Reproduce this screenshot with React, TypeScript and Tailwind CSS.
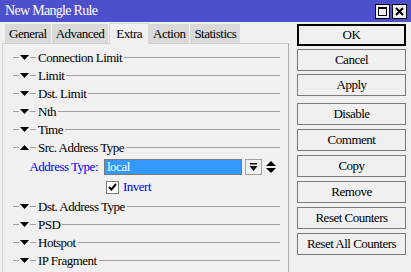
function Tri({ up = false }: { up?: boolean }) {
  return (
    <svg width="9" height="5" viewBox="0 0 9 5" className="shrink-0">
      {up ? <polygon points="0,5 9,5 4.5,0" fill="#000" /> : <polygon points="0,0 9,0 4.5,5" fill="#000" />}
    </svg>
  );
}

function Section({ label, up = false }: { label: string; up?: boolean }) {
  return (
    <div className="flex items-center h-[18px] pl-[10px] pr-[8px]">
      <div className="w-[6px] h-px bg-[#a0a0a0]" />
      <div className="mx-[1px]"><Tri up={up} /></div>
      <div className="w-[6px] h-px bg-[#a0a0a0]" />
      <span className="px-[2px] text-[13px] leading-none text-black whitespace-nowrap">{label}</span>
      <div className="flex-1 h-px bg-[#a0a0a0]" />
    </div>
  );
}

function Btn({ label, primary = false }: { label: string; primary?: boolean }) {
  return (
    <div
      className={`h-[22px] flex items-center justify-center text-[13px] text-black bg-[#f0f0f0] ${
        primary ? 'border-2 border-black' : 'border border-[#7a7a7a]'
      }`}
    >
      {label}
    </div>
  );
}

export default function App() {
  const tabs = ['General', 'Advanced', 'Extra', 'Action', 'Statistics'];
  return (
    <div className="w-[411px] h-[272px] bg-[#f0f0f0] overflow-hidden flex flex-col font-['Liberation_Serif','DejaVu_Serif',serif] tracking-[-0.5px]">
      {/* title */}
      <div className="h-[22px] bg-[#4e4fcb] flex items-center pl-[5px] pr-[4px] shrink-0">
        <span className="text-white text-[14px] leading-none flex-1 tracking-[-0.7px]">New Mangle Rule</span>
        <div className="flex gap-[2px]">
          <div className="w-[15px] h-[15px] bg-[#f0f0f0] border border-black flex items-center justify-center">
            <div className="w-[9px] h-[9px] border border-black border-t-2" />
          </div>
          <div className="w-[15px] h-[15px] bg-[#f0f0f0] border border-black flex items-center justify-center">
            <svg width="9" height="9" viewBox="0 0 9 9">
              <path d="M1 1 L8 8 M8 1 L1 8" stroke="#000" strokeWidth="2" />
            </svg>
          </div>
        </div>
      </div>

      <div className="flex flex-1">
        {/* left */}
        <div className="w-[290px] flex flex-col pl-[2px]">
          <div className="flex items-end h-[21px] pl-[3px] shrink-0">
            {tabs.map((t) =>
              t === 'Extra' ? (
                <div key={t} className="h-[21px] px-[6px] bg-[#f0f0f0] border-x border-t border-[#d8d8d8] flex items-center text-[13px] relative z-10 -mb-px">
                  {t}
                </div>
              ) : (
                <div key={t} className="h-[19px] px-[4px] bg-[#d9d9d9] border-r border-[#f0f0f0] flex items-center text-[13px]">
                  {t}
                </div>
              )
            )}
          </div>
          <div className="flex-1 border-l border-t border-r border-[#d0d0d0] border-r-[#b0b0b0] pt-[4px] mr-[1px]">
            <Section label="Connection Limit" />
            <Section label="Limit" />
            <Section label="Dst. Limit" />
            <Section label="Nth" />
            <Section label="Time" />
            <Section label="Src. Address Type" up />
            <div className="flex items-center h-[20px] mt-[1px]">
              <span className="w-[101px] text-right pr-[6px] text-[13px] text-[#0000ff]">Address Type:</span>
              <div className="w-[138px] h-[16px] bg-[#3399ff] border border-[#7a7a7a] flex items-center pl-[2px] text-[13px] text-white">
                local
              </div>
              <div className="ml-[3px] w-[17px] h-[16px] border border-[#a0a0a0] bg-[#f0f0f0] flex items-center justify-center">
                <svg width="9" height="9" viewBox="0 0 9 9">
                  <rect x="1" y="0" width="7" height="1.5" fill="#000" />
                  <polygon points="0.5,3 8.5,3 4.5,8" fill="#000" />
                </svg>
              </div>
              <div className="ml-[4px]">
                <svg width="10" height="12" viewBox="0 0 10 12">
                  <polygon points="0,5 10,5 5,0" fill="#000" />
                  <polygon points="0,7 10,7 5,12" fill="#000" />
                </svg>
              </div>
            </div>
            <div className="flex items-center h-[20px] pl-[103px]">
              <div className="w-[13px] h-[13px] border border-[#7a7a7a] bg-white flex items-center justify-center">
                <svg width="9" height="8" viewBox="0 0 9 8">
                  <path d="M1 4 L3.5 6.5 L8 1" stroke="#000" strokeWidth="2" fill="none" />
                </svg>
              </div>
              <span className="ml-[4px] text-[13px] text-[#0000ff]">Invert</span>
            </div>
            <Section label="Dst. Address Type" />
            <Section label="PSD" />
            <Section label="Hotspot" />
            <Section label="IP Fragment" />
          </div>
        </div>

        {/* right */}
        <div className="flex-1 pl-[7px] pr-[5px] pt-[2px] flex flex-col">
          <div className="flex flex-col gap-[3px]">
            <Btn label="OK" primary />
            <Btn label="Cancel" />
            <Btn label="Apply" />
          </div>
          <div className="flex flex-col gap-[4px] mt-[7px]">
            <Btn label="Disable" />
            <Btn label="Comment" />
            <Btn label="Copy" />
            <Btn label="Remove" />
            <Btn label="Reset Counters" />
            <Btn label="Reset All Counters" />
          </div>
        </div>
      </div>
    </div>
  );
}
